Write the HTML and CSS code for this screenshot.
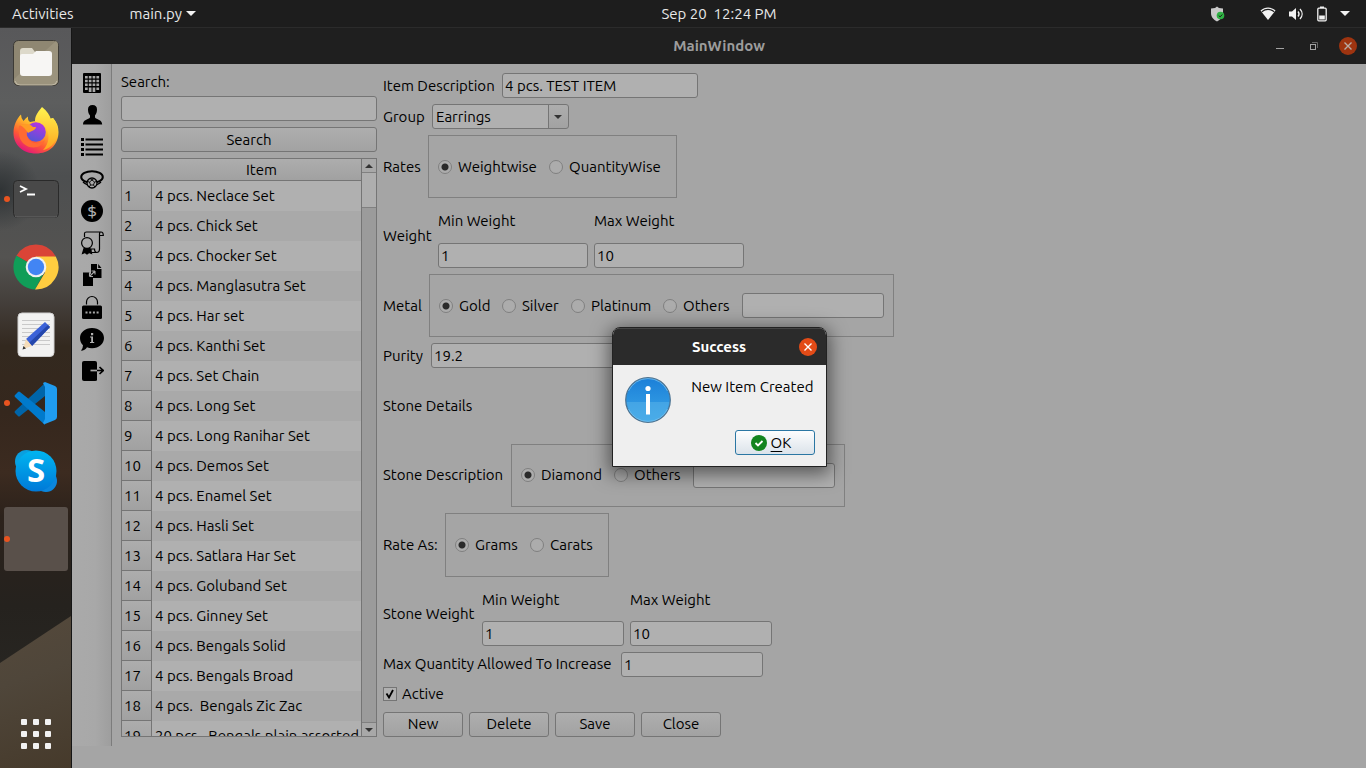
FILE: index.html
```html
<!DOCTYPE html>
<html lang="en">
<head>
<meta charset="utf-8">
<title>MainWindow</title>
<link rel="stylesheet" href="styles.css">
</head>
<body>
<header class="topbar">
  <div class="topbar-left">
    <button class="top-item" type="button">Activities</button>
    <button class="top-item" type="button">main.py <span class="caret"></span></button>
  </div>
  <button class="top-item" type="button">Sep 20&nbsp; 12:24 PM</button>
  <div class="tray">
    <svg class="shield" width="16" height="16" viewBox="0 0 16 16" aria-label="Security"><path d="M7 0.5 9 2l4 .6V7c0 4-2.500 6.500-6 8.500C3.500 13.500 1 11 1 7V2.600L5 2z" fill="#c9c9c9"/><circle cx="10.500" cy="9.500" r="3.800" fill="#2fb344"/><path d="m8.700 9.500 1.400 1.400 2.200-2.400" fill="none" stroke="#1d1d1d" stroke-width="1"/></svg>
    <svg width="16" height="16" viewBox="0 0 16 16" aria-label="Wi-Fi"><path d="M.5 4.500C5 .5 11 .5 15.500 4.500L8 14z" fill="#f2f2f2"/><path d="M1.800 5.700c4-3 8.400-3 12.400 0" fill="none" stroke="#1d1d1d" stroke-width="1.200"/></svg>
    <svg width="16" height="16" viewBox="0 0 16 16" aria-label="Volume"><path d="M1 5.500h3L8 2v12l-4-3.500H1z" fill="#f2f2f2"/><path d="M10 5.500c1.300 1.500 1.300 3.500 0 5M12 3c2.800 3 2.800 7 0 10" fill="none" stroke="#f2f2f2" stroke-width="1.300"/></svg>
    <svg width="12" height="16" viewBox="0 0 12 16" aria-label="Battery"><rect x="1.800" y="2.200" width="8.400" height="12.600" rx="1" fill="none" stroke="#f2f2f2" stroke-width="1.300"/><path d="M4 .5h4v1.500H4zM3.200 9.500h5.600v4H3.200z" fill="#f2f2f2"/></svg>
    <span class="caret"></span>
  </div>
</header>

<div class="desktop">
  <nav class="dock" aria-label="Dock">
    <button class="dock-item" type="button" aria-label="Files">
      <svg width="48" height="48" viewBox="0 0 48 48"><rect x="1.500" y="1.500" width="45" height="45" rx="5" fill="#8f8772" stroke="#3d3b36"/><path d="M2 40 44 2q2 1 2 4v35q0 5-5 5H7q-5 0-5-5z" fill="#9b937d"/><path d="M3 42q1 4 5 4h32q4 0 5-4" fill="none" stroke="#c2bba8"/><path d="M8 12q0-3 3-3h9l3 4h14q3 0 3 3v8H8z" fill="#ddd9ca"/><path d="M8 17q0-2 2-2h11l3-3h13q3 0 3 3v19q0 3-3 3H11q-3 0-3-3z" fill="#f7f6f4"/></svg>
    </button>
    <button class="dock-item" type="button" aria-label="Firefox">
      <svg width="48" height="48" viewBox="0 0 48 48">
        <defs>
          <linearGradient id="ffBody" x1=".8" y1=".1" x2=".25" y2=".95"><stop offset="0" stop-color="#fff04a"/><stop offset=".35" stop-color="#ffb52a"/><stop offset=".68" stop-color="#ff5a34"/><stop offset="1" stop-color="#e2177a"/></linearGradient>
          <linearGradient id="ffFlame" x1="0" y1="0" x2="0" y2="1"><stop offset="0" stop-color="#fff44f"/><stop offset="1" stop-color="#ffa51f"/></linearGradient>
          <linearGradient id="ffGlobe" x1=".7" y1="0" x2=".3" y2="1"><stop offset="0" stop-color="#b833e1"/><stop offset="1" stop-color="#5057d6"/></linearGradient>
        </defs>
        <path d="M9 7.500q0 4 2.500 6.500 2-3 4.500-4.500-.5 4 2 5.500 4-1 8-1l15-3q5.500 6 5.500 14C46.500 38 37 46.500 24 46.500S1.500 38 1.500 26C1.500 18 5 11.500 9 7.500z" fill="url(#ffBody)"/>
        <path d="M30 0c5 4 8 8 9 13l2-2c4 5 6 11 4 18-2 8-8 13-14 14 7-7 7-17 2-24-3-1-9-3-10-5 0-6 4-10 7-14z" fill="url(#ffFlame)"/>
        <circle cx="24" cy="25" r="9.800" fill="url(#ffGlobe)"/>
        <path d="M7 19c5-2 9-2 12 1-4 3-5 6-4 9 2 7 11 10 18 4-3 8-14 10-21 4-5-4-6-12-5-18z" fill="#ff6a33"/>
        <path d="M8 18c5-1 9-2 13 2h3c0 3-5 4-8 6-2-3-4-6-8-8z" fill="#ff9d24"/>
      </svg>
    </button>
    <button class="dock-item running" type="button" aria-label="Terminal">
      <svg width="48" height="48" viewBox="0 0 48 48"><rect x="1.500" y="5.500" width="45" height="37" rx="4" fill="#494949" stroke="#2a2a2a"/><path d="M3 41q1 1 3 1h36q2 0 3-1" fill="none" stroke="#666"/><path d="m8 11 6 3-6 3M15 19.500h8" fill="none" stroke="#fff" stroke-width="1.800"/></svg>
    </button>
    <button class="dock-item" type="button" aria-label="Chrome">
      <svg width="48" height="48" viewBox="0 0 48 48"><path d="M24 24 4.500 12.700A22.500 22.500 0 0 1 43.500 13z" fill="#da4437"/><path d="M24 24h11l-12 22.500A22.500 22.500 0 0 1 4.500 12.700z" fill="#109d58"/><path d="M24 13.500h19.800A22.500 22.500 0 0 1 23 46.500l10-17z" fill="#ffcd40"/><circle cx="24" cy="24" r="10.300" fill="#f1f1f1"/><circle cx="24" cy="24" r="8.200" fill="#4285f4"/></svg>
    </button>
    <button class="dock-item" type="button" aria-label="Text Editor">
      <svg width="48" height="48" viewBox="0 0 48 48"><rect x="6" y="2" width="36" height="43.500" rx="4" fill="#f2f2f1" stroke="#d0d0d0"/><path d="M10 9.500h28M10 13.500h28M10 17.500h28M10 21.500h28M10 25.500h28M10 29.500h28M10 33.500h28" stroke="#c9c9c9"/><path d="m14 28 19-17 5 5-18 19z" fill="#3b62d8"/><path d="m17 32 19-18 2 2-18 19z" fill="#2447ac"/><path d="m14 28 6 7-9 3z" fill="#f5dcb8"/><path d="m11.500 35 2.500 2.500-3.500 1z" fill="#333"/></svg>
    </button>
    <button class="dock-item running" type="button" aria-label="Visual Studio Code">
      <svg width="48" height="48" viewBox="0 0 48 48"><path d="M3 32 33 4v13L8 37q-1 1-2 0l-3-3q-1-1 0-2z" fill="#0065a9"/><path d="M3 16 6 13q1-1 2 0l25 20v13L3 18q-1-1 0-2z" fill="#007acc"/><path d="m33 3 10 4q2 1 2 3v28q0 2-2 3l-10 4q-1 0-2-1l2-4V8l-2-4z" fill="#1f9cf0"/></svg>
    </button>
    <button class="dock-item" type="button" aria-label="Skype">
      <svg width="48" height="48" viewBox="0 0 48 48"><defs><linearGradient id="sky" x1="0" y1="0" x2="0" y2="1"><stop offset="0" stop-color="#00b5f0"/><stop offset="1" stop-color="#0079d8"/></linearGradient></defs><circle cx="14.500" cy="14.500" r="11.500" fill="#0a9fdf"/><circle cx="34" cy="34" r="11" fill="#0b86dd"/><circle cx="24" cy="24" r="20.500" fill="url(#sky)"/><text class="skype-letter" x="24" y="35" text-anchor="middle">S</text></svg>
    </button>
    <button class="dock-item running active" type="button" aria-label="main.py"></button>
    <button class="dock-item apps" type="button" aria-label="Show Applications">
      <svg width="30" height="30" viewBox="0 0 30 30" fill="#f2f2f2"><rect width="6" height="6" rx="1"/><rect x="12" width="6" height="6" rx="1"/><rect x="24" width="6" height="6" rx="1"/><rect y="12" width="6" height="6" rx="1"/><rect x="12" y="12" width="6" height="6" rx="1"/><rect x="24" y="12" width="6" height="6" rx="1"/><rect y="24" width="6" height="6" rx="1"/><rect x="12" y="24" width="6" height="6" rx="1"/><rect x="24" y="24" width="6" height="6" rx="1"/></svg>
    </button>
  </nav>

  <main class="window">
    <div class="titlebar">
      <h1 class="title">MainWindow</h1>
      <div class="window-buttons">
        <button class="win-btn" type="button" aria-label="Minimize"><svg width="18" height="18" viewBox="0 0 18 18"><path d="M5 11.500h8" stroke="#a3a3a3"/></svg></button>
        <button class="win-btn" type="button" aria-label="Restore"><svg width="18" height="18" viewBox="0 0 18 18" fill="none"><rect x="5.500" y="7.500" width="5" height="5" stroke="#a3a3a3"/><path d="M7 5.500h5.500V11" stroke="#666"/></svg></button>
        <button class="win-btn close-dim" type="button" aria-label="Close window"><svg width="18" height="18" viewBox="0 0 18 18"><path d="m5.500 5.500 7 7m0-7-7 7" stroke="#b9aca6" stroke-width="1.400"/></svg></button>
      </div>
    </div>

    <div class="content">
      <nav class="toolbar" aria-label="Tools">
        <button class="tool" type="button" aria-label="Company"><svg width="24" height="24" viewBox="0 0 24 24"><path fill-rule="evenodd" d="M4 2h16q1 0 1 1v18q0 1-1 1H4q-1 0-1-1V3q0-1 1-1zM5 5v2.500h2.700V5zm3.800 0v2.500h2.700V5zm3.800 0v2.500h2.700V5zm3.800 0v2.500h2.700V5zM5 8.800v2.400h2.700V8.800zm3.800 0v2.400h2.700V8.800zm3.800 0v2.400h2.700V8.800zm3.800 0v2.400h2.700V8.800zM5 12.500v2.500h2.700v-2.500zm3.800 0v2.500h2.700v-2.500zm3.800 0v2.500h2.700v-2.500zm3.800 0v2.500h2.700v-2.500zM5 16.500v2.500h2.700v-2.500zm3.800 0v4.500h2.700v-4.500zm3.800 0v4.500h2.700v-4.500zm3.800 0v2.500h2.700v-2.500z"/></svg></button>
        <button class="tool" type="button" aria-label="Customer"><svg width="24" height="24" viewBox="0 0 24 24"><path d="M12.500 2c3 0 4.500 1.700 4.500 4.500 0 2.600-.8 4.600-2 6v2c1.500 2 7 2 7.200 7H3c0-5 5.500-5 7-7v-2c-1.300-1.400-2-3.400-2-6C8 3.700 9.500 2 12.500 2z"/></svg></button>
        <button class="tool" type="button" aria-label="List"><svg width="24" height="24" viewBox="0 0 24 24"><path d="M1 3h3v3H1zm0 5h3v3H1zm0 5h3v3H1zm0 5h3v3H1zM5.500 3.500H23v2H5.500zm0 5H23v2H5.500zm0 5H23v2H5.500zm0 5H23v2H5.500z"/></svg></button>
        <button class="tool" type="button" aria-label="Item"><svg width="24" height="24" viewBox="0 0 24 24" fill="none" stroke="#000"><ellipse cx="12" cy="10" rx="10.800" ry="5.800" stroke-width="2"/><path d="M3 15q4 3 5 3M21 15q-4 3-5 3" stroke-width="1.500"/><circle cx="12" cy="16" r="5" fill="#a8a8a8" stroke-width="1.300"/><path d="m12 13 2.500 2-1 3h-3l-1-3zM12 13l-2-1.500M12 13l2-1.500M14.500 15l2.300-.5M13.500 18l1.300 2M10.500 18l-1.300 2M9.500 15l-2.300-.5" stroke-width=".9"/></svg></button>
        <button class="tool" type="button" aria-label="Rates"><svg width="24" height="24" viewBox="0 0 24 24"><circle cx="12" cy="12" r="11"/><text class="coin-letter" x="12" y="18" text-anchor="middle">$</text></svg></button>
        <button class="tool" type="button" aria-label="Certificate"><svg width="24" height="24" viewBox="0 0 24 24" fill="none" stroke="#000" stroke-width="1.200"><path d="M4.500 6V2.500q0-1.500 2-1.500H21q2.300 0 2.300 3.500h-3.800V3q0-2 1.500-2M19.500 4.500V18q0 3.500-3 3.500H11M11 21.500V18h3.500q0 3 2 3.500"/><circle cx="7" cy="12" r="5.400"/><path d="M4 17.500h6l1.500 5-2.500-1-2 1.500-2-1.500-2.500 1z" fill="#000"/></svg></button>
        <button class="tool" type="button" aria-label="Transfer"><svg width="24" height="24" viewBox="0 0 24 24"><path d="M11 1h6v5h4.500v9H11zM18.200 1l3.300 4h-3.300z"/><path d="M3 9.500h6l4 4V23H3z"/><path d="M9.500 13.500 15 8m-5.500 5.500V10m0 3.500H13M15 8v3.500M15 8h-3.500" stroke="#a8a8a8" fill="none" stroke-width="1.100"/></svg></button>
        <button class="tool" type="button" aria-label="Password"><svg width="24" height="24" viewBox="0 0 24 24"><path d="M6.500 9.500V7a5.500 5.500 0 0 1 11 0v2.500" fill="none" stroke="#000" stroke-width="1.200"/><rect x="2" y="10.500" width="20" height="13.500" rx="1.500"/><path d="M5.500 16.500h2v2h-2zm3.700 0h2v2h-2zm3.700 0h2v2h-2zm3.700 0h2v2h-2z" fill="#a8a8a8"/></svg></button>
        <button class="tool" type="button" aria-label="About"><svg width="24" height="24" viewBox="0 0 24 24"><path d="M12 1c7 0 12 4.500 12 10s-5 10.300-12 10.300q-3 0-5-1Q5 23.500 1 23.800q2-2.300 2-5.500Q0 15.500 0 11C0 5.500 5 1 12 1z"/><path d="M11 6h2.200v2.200H11zM10 9.500h3V15h1.200v1H10v-1h1.200v-4.500H10z" fill="#b0b0b0"/></svg></button>
        <button class="tool" type="button" aria-label="Exit"><svg width="24" height="24" viewBox="0 0 24 24"><path d="M4 2h11q2 0 2 2v17q0 1-2 1H4q-2 0-2-2V4q0-2 2-2z"/><path d="M10.500 11.500H17" stroke="#a8a8a8" stroke-width="1.700"/><path d="M17 11.500h6M19.500 8l3.700 3.500-3.700 3.500" fill="none" stroke="#000" stroke-width="1.700"/></svg></button>
      </nav>

      <section class="items">
        <label class="search-label" for="search">Search:</label>
        <input class="field" id="search" type="text">
        <button class="btn" type="button">Search</button>
        <div class="list">
          <div class="list-view">
            <table class="item-table">
              <colgroup><col class="col-number"><col></colgroup>
              <thead><tr><th class="head" colspan="2" scope="col">Item</th></tr></thead>
              <tbody>
                <tr><th scope="row">1</th><td>4 pcs. Neclace Set</td></tr>
                <tr><th scope="row">2</th><td>4 pcs. Chick Set</td></tr>
                <tr><th scope="row">3</th><td>4 pcs. Chocker Set</td></tr>
                <tr><th scope="row">4</th><td>4 pcs. Manglasutra Set</td></tr>
                <tr><th scope="row">5</th><td>4 pcs. Har set</td></tr>
                <tr><th scope="row">6</th><td>4 pcs. Kanthi Set</td></tr>
                <tr><th scope="row">7</th><td>4 pcs. Set Chain</td></tr>
                <tr><th scope="row">8</th><td>4 pcs. Long Set</td></tr>
                <tr><th scope="row">9</th><td>4 pcs. Long Ranihar Set</td></tr>
                <tr><th scope="row">10</th><td>4 pcs. Demos Set</td></tr>
                <tr><th scope="row">11</th><td>4 pcs. Enamel Set</td></tr>
                <tr><th scope="row">12</th><td>4 pcs. Hasli Set</td></tr>
                <tr><th scope="row">13</th><td>4 pcs. Satlara Har Set</td></tr>
                <tr><th scope="row">14</th><td>4 pcs. Goluband Set</td></tr>
                <tr><th scope="row">15</th><td>4 pcs. Ginney Set</td></tr>
                <tr><th scope="row">16</th><td>4 pcs. Bengals Solid</td></tr>
                <tr><th scope="row">17</th><td>4 pcs. Bengals Broad</td></tr>
                <tr><th scope="row">18</th><td>4 pcs.&nbsp; Bengals Zic Zac</td></tr>
                <tr><th scope="row">19</th><td>20 pcs.&nbsp; Bengals plain assorted</td></tr>
              </tbody>
            </table>
          </div>
          <div class="scrollbar">
            <button class="scroll-btn up" type="button" aria-label="Scroll up"></button>
            <div class="scroll-thumb"></div>
            <button class="scroll-btn down" type="button" aria-label="Scroll down"></button>
          </div>
        </div>
      </section>

      <form class="form">
        <div class="row"><label class="l-desc" for="desc">Item Description</label><input class="field w-desc" id="desc" type="text" value="4 pcs. TEST ITEM"></div>
        <div class="row"><label class="l-group" for="group">Group</label><span class="combo"><select id="group"><option>Earrings</option></select></span></div>
        <div class="row tall"><span class="l-rates" id="lr">Rates</span>
          <div class="frame g-rates" role="radiogroup" aria-labelledby="lr">
            <label class="opt"><input type="radio" name="rates" checked>Weightwise</label>
            <label class="opt"><input type="radio" name="rates">QuantityWise</label>
          </div></div>
        <div class="row tall"><span class="l-weight">Weight</span>
          <div class="pair"><label for="minw">Min Weight</label><input class="field w-weight" id="minw" type="text" value="1"></div>
          <div class="pair"><label for="maxw">Max Weight</label><input class="field w-weight" id="maxw" type="text" value="10"></div></div>
        <div class="row tall"><span class="l-metal" id="lm">Metal</span>
          <div class="frame g-metal" role="radiogroup" aria-labelledby="lm">
            <label class="opt"><input type="radio" name="metal" checked>Gold</label>
            <label class="opt"><input type="radio" name="metal">Silver</label>
            <label class="opt"><input type="radio" name="metal">Platinum</label>
            <label class="opt"><input type="radio" name="metal">Others</label>
            <input class="field" type="text" aria-label="Other metal">
          </div></div>
        <div class="row"><label class="l-purity" for="purity">Purity</label><input class="field w-desc" id="purity" type="text" value="19.2"></div>
        <div class="row tall"><span>Stone Details</span></div>
        <div class="row tall"><span class="l-stone" id="ls">Stone Description</span>
          <div class="frame g-stone" role="radiogroup" aria-labelledby="ls">
            <label class="opt"><input type="radio" name="stone" checked>Diamond</label>
            <label class="opt"><input type="radio" name="stone">Others</label>
            <input class="field" type="text" aria-label="Other stone">
          </div></div>
        <div class="row tall"><span class="l-rateas" id="la">Rate As:</span>
          <div class="frame g-rateas" role="radiogroup" aria-labelledby="la">
            <label class="opt"><input type="radio" name="rateas" checked>Grams</label>
            <label class="opt"><input type="radio" name="rateas">Carats</label>
          </div></div>
        <div class="row tall"><span class="l-stonew">Stone Weight</span>
          <div class="pair"><label for="smin">Min Weight</label><input class="field w-std" id="smin" type="text" value="1"></div>
          <div class="pair"><label for="smax">Max Weight</label><input class="field w-std" id="smax" type="text" value="10"></div></div>
        <div class="row"><label class="l-max" for="maxq">Max Quantity Allowed To Increase</label><input class="field w-std" id="maxq" type="text" value="1"></div>
        <label class="check"><span class="check-box"><input type="checkbox" checked><svg width="14" height="14" viewBox="0 0 14 14"><path d="m3.500 6.500 2.500 4 4-7.500" fill="none" stroke="#000" stroke-width="1.800"/></svg></span>Active</label>
        <div class="row actions">
          <button class="btn" type="button">New</button>
          <button class="btn" type="button">Delete</button>
          <button class="btn" type="button">Save</button>
          <button class="btn" type="button">Close</button>
        </div>
      </form>
    </div>
    <footer class="statusbar"></footer>

    <div class="overlay">
      <section class="dialog" role="dialog" aria-labelledby="dlg">
        <div class="dialog-head">
          <h2 class="title bright" id="dlg">Success</h2>
          <button class="win-btn close-hot" type="button" aria-label="Close dialog"><svg width="18" height="18" viewBox="0 0 18 18"><path d="m5.500 5.500 7 7m0-7-7 7" stroke="#fff" stroke-width="1.400"/></svg></button>
        </div>
        <div class="dialog-body">
          <svg width="46" height="46" viewBox="0 0 46 46" aria-label="Information"><defs><linearGradient id="info" x1="0" y1="0" x2="0" y2="1"><stop offset="0" stop-color="#1b7fd8"/><stop offset="1" stop-color="#3ba7e8"/></linearGradient></defs><circle cx="23" cy="23" r="22.300" fill="url(#info)" stroke="#4d7391" stroke-width="1.200"/><path d="M1.800 25h42.400A21.300 21.300 0 0 1 1.800 25z" fill="#58b2e9" opacity=".55"/><path d="M3.500 14a21.500 21.500 0 0 1 39 0M3.500 32a21.500 21.500 0 0 0 39 0" fill="none" stroke="#7cc6f2" opacity=".7"/><circle cx="23" cy="11.500" r="2.600" fill="#fff"/><rect x="21" y="17" width="4" height="20.500" fill="#fff"/></svg>
          <p class="message">New Item Created</p>
        </div>
        <div class="dialog-foot">
          <button class="btn ok" type="button"><svg width="16" height="16" viewBox="0 0 16 16"><circle cx="8" cy="8" r="8" fill="#12841f"/><path d="m4.500 8 2.500 2.500L11.500 6" fill="none" stroke="#fff" stroke-width="1.800"/></svg><span><u>O</u>K</span></button>
        </div>
      </section>
    </div>
  </main>
</div>
</body>
</html>
```
FILE: styles.css
```css
* { box-sizing: border-box; }
body {
  margin: 0;
  height: 100vh;
  display: flex;
  flex-direction: column;
  overflow: hidden;
  background: #1f1f1f;
  color: #000;
  font: 15px/18px Ubuntu, "Noto Sans", "Open Sans", sans-serif;
}
button, input, select { font: inherit; color: inherit; margin: 0; }
button { padding: 0; border: 0; background: none; }
svg { display: block; flex: none; }

/* Top bar: the clock is centred over the window area, right of the dock */
.topbar {
  height: 28px;
  flex: none;
  display: grid;
  grid-template-columns: 1fr auto 1fr;
  align-items: center;
  padding: 0 16px 0 88px;
  background: #1d1d1d;
  border-bottom: 1px solid #2b2b2b;
  color: #e8e8e8;
}
.topbar-left { display: flex; gap: 56px; margin-left: -76px; }
.top-item { display: flex; align-items: center; gap: 4px; }
.caret {
  border: 5px solid transparent;
  border-top-color: #f2f2f2;
  border-bottom: 0;
}
.tray { display: flex; align-items: center; justify-content: flex-end; gap: 12px; }
.shield { margin-right: 22px; }

/* Dock */
.desktop { flex: 1; min-height: 0; display: flex; }
.dock {
  position: relative;
  width: 72px;
  flex: none;
  display: flex;
  flex-direction: column;
  gap: 4px;
  padding: 3px 3px 2px 4px;
  border-right: 1px solid #151515;
  background:
    radial-gradient(40px 40px at 0 22%, #2f3335, transparent),
    linear-gradient(#58585a 0, #5d5e5e 10%, #4d4f50 20%, #545351 31%, #443f3b 37%, #33291f 43%, #35271d 52%, #3c2b20 60%, #2c221b 66%, #25221e 78%, #2b2a26 100%);
}
.dock::before {
  content: "";
  position: absolute;
  inset: auto 0 0 0;
  height: 152px;
  clip-path: polygon(0 47px, 100% 0, 100% 100%, 0 100%);
  background: linear-gradient(160deg, #55493b, #4f463a 40%, #463a2b);
}
.dock-item {
  position: relative;
  flex: 0 0 64px;
  display: grid;
  place-items: center;
  border-radius: 3px;
}
.dock-item.active { background: #59504a; }
.dock-item.running::before {
  content: "";
  position: absolute;
  left: 0;
  top: 29px;
  width: 6px;
  height: 6px;
  border-radius: 50%;
  background: #e95420;
}
.apps { margin-top: auto; }
.skype-letter { font: bold 33px "Noto Sans", sans-serif; fill: #fff; }
.coin-letter { font: 17px "Noto Sans", sans-serif; fill: #b0b0b0; }

/* Window */
.window { position: relative; flex: 1; min-width: 0; display: flex; flex-direction: column; background: #a5a5a5; }
.titlebar {
  position: relative;
  height: 36px;
  flex: none;
  display: grid;
  grid-template-columns: 1fr auto 1fr;
  align-items: center;
  padding: 0 9px;
  background: #1f1f1f;
}
.title { grid-column: 2; margin: 0; font-size: 15px; line-height: 18px; font-weight: 700; color: #9c9c9c; }
.bright { color: #fff; }
.window-buttons { display: flex; justify-content: flex-end; gap: 16px; }
.win-btn { width: 18px; height: 18px; border-radius: 50%; }
.close-dim { background: #9e3410; }
.close-hot { background: #e34b17; justify-self: end; }

.content { flex: 1; min-height: 0; display: flex; }
.statusbar { height: 22px; flex: none; }
.toolbar {
  width: 40px;
  flex: none;
  display: flex;
  flex-direction: column;
  align-items: center;
  gap: 8px;
  padding-top: 7px;
  border-right: 1px solid #7c7c7c;
  background: linear-gradient(90deg, #aaa, #a8a8a8 60%, #9e9e9e);
}

/* Controls */
.field {
  height: 25px;
  min-width: 0;
  padding: 0 2px;
  border: 1px solid #757575;
  border-radius: 3px;
  background: #b0b0b0;
}
.btn {
  height: 25px;
  border: 1px solid #757575;
  border-radius: 3px;
  background: linear-gradient(#aeaeae, #a2a2a2);
}

/* Item list */
.items { width: 265px; flex: none; display: flex; flex-direction: column; gap: 6px; padding: 9px 0 9px 9px; }
.search-label { height: 17px; }
.list { flex: 1; min-height: 0; display: flex; border: 1px solid #757575; }
.list-view { flex: 1; min-width: 0; overflow: hidden; }
.item-table { width: 100%; border-collapse: separate; border-spacing: 0; table-layout: fixed; }
.item-table th { font-weight: 400; text-align: left; }
.item-table td, .item-table tbody th { height: 30px; padding: 0 0 0 3px; white-space: nowrap; }
.col-number { width: 30px; }
.item-table tbody th {
  padding-left: 2px;
  border-right: 1px solid #757575;
  border-bottom: 1px solid #757575;
  background: linear-gradient(#adadad, #a1a1a1);
}
.item-table .head {
  height: 22px;
  padding: 0 0 0 40px;
  text-align: center;
  border-bottom: 1px solid #757575;
  background: linear-gradient(#adadad, #a1a1a1);
}
.item-table tbody tr { background: #b0b0b0; }
.item-table tbody tr:nth-child(even) { background: #a9a9a9; }
.scrollbar { width: 15px; flex: none; display: flex; flex-direction: column; border-left: 1px solid #757575; background: #9b9b9b; }
.scroll-btn { height: 14px; display: grid; place-items: center; background: #a8a8a8; }
.scroll-btn::before { content: ""; border: 4px solid transparent; }
.up { border-bottom: 1px solid #808080; }
.up::before { border-bottom-color: #333; border-top: 0; }
.down { margin-top: auto; border-top: 1px solid #808080; }
.down::before { border-top-color: #333; border-bottom: 0; }
.scroll-thumb { height: 35px; background: #aeaeae; border-bottom: 1px solid #808080; }

/* Form */
.form { flex: 1; min-width: 0; display: flex; flex-direction: column; gap: 6px; padding: 9px 9px 9px 6px; }
.row { display: flex; align-items: center; gap: 6px; white-space: nowrap; }
.tall { flex: 1; }
.l-desc { width: 113px; }
.l-group { width: 43px; }
.l-rates { width: 39px; }
.l-weight { width: 49px; }
.l-metal { width: 40px; }
.l-purity { width: 42px; }
.l-stone { width: 122px; }
.l-rateas { width: 56px; }
.l-stonew { width: 93px; }
.l-max { width: 232px; }
.w-desc { width: 196px; }
.w-weight { width: 150px; }
.w-std { width: 142px; }
.pair { align-self: stretch; display: flex; flex-direction: column; justify-content: space-between; padding-top: 8px; }
.frame {
  align-self: stretch;
  display: grid;
  align-items: center;
  padding: 0 9px;
  border: 1px solid #808080;
}
.g-rates { grid-template-columns: 111px 118px; }
.g-metal { grid-template-columns: 63px 69px 92px 79px 142px; }
.g-stone { grid-template-columns: 93px 79px 142px; }
.g-rateas { grid-template-columns: 75px 69px; }
.opt { display: flex; align-items: center; gap: 6px; }
.opt input {
  appearance: none;
  width: 14px;
  height: 14px;
  flex: none;
  border: 1px solid #808080;
  border-radius: 50%;
  background: #acacac;
}
.opt input:checked { background: radial-gradient(circle, #2a2a2a 3px, #acacac 4px); }
.combo { position: relative; width: 137px; }
.combo select {
  appearance: none;
  display: block;
  width: 100%;
  height: 25px;
  padding: 0 3px;
  border: 1px solid #757575;
  border-radius: 3px;
  background: linear-gradient(#757575, #757575) right 19px top / 1px 100% no-repeat, linear-gradient(#adadad, #a2a2a2) right / 19px 100% no-repeat #b0b0b0;
}
.combo::after {
  content: "";
  position: absolute;
  right: 7px;
  top: 11px;
  border: 4px solid transparent;
  border-top-color: #333;
  border-bottom: 0;
  pointer-events: none;
}
.check { display: flex; align-items: center; align-self: flex-start; gap: 5px; height: 23px; }
.check-box { position: relative; width: 14px; height: 14px; }
.check-box input { appearance: none; display: block; width: 14px; height: 14px; border: 1px solid #757575; background: #b0b0b0; }
.check-box svg { position: absolute; inset: 0; pointer-events: none; }
.actions .btn { width: 80px; }

/* Dialog */
.overlay { position: absolute; inset: 0; display: grid; place-items: center; padding-bottom: 2px; }
.dialog {
  min-width: 215px;
  border: 1px solid #222;
  border-radius: 8px 8px 0 0;
  background: #efefef;
  box-shadow: 0 4px 18px 3px rgba(0, 0, 0, .5);
  overflow: hidden;
}
.dialog-head {
  height: 37px;
  display: grid;
  grid-template-columns: 1fr auto 1fr;
  align-items: center;
  padding: 0 9px;
  background: #2b2b2b;
  box-shadow: inset 0 1px #444;
}
.dialog-body { display: flex; justify-content: space-between; gap: 16px; padding: 12px 12px 0; }
.message { margin: 1px 0 0; white-space: nowrap; }
.dialog-foot { display: flex; justify-content: flex-end; padding: 7px 11px 11px; }
.ok {
  width: 80px;
  display: flex;
  align-items: center;
  justify-content: center;
  gap: 4px;
  padding-right: 7px;
  border-color: #2a76a3;
  background: linear-gradient(#fdfdfe, #dbe3ea);
}
.ok u { text-underline-offset: 3px; }
```
